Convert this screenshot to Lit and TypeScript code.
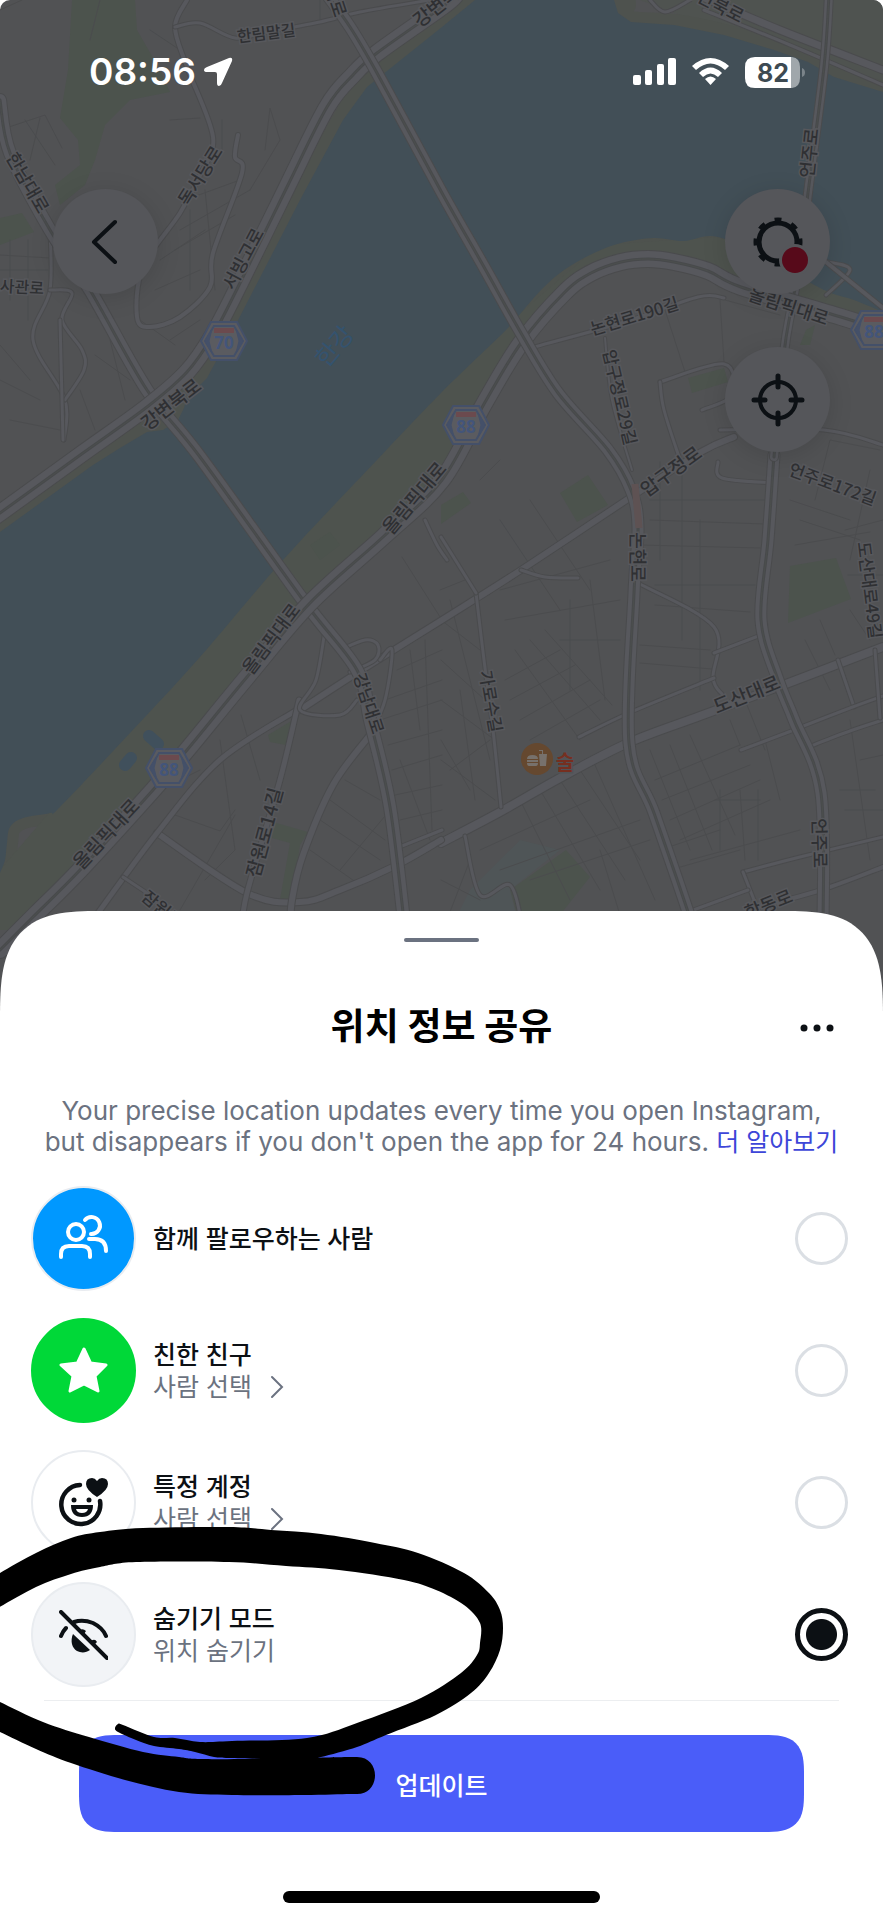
import { LitElement, html, svg, css } from "lit";
import { customElement, state } from "lit/decorators.js";

type Point = [number, number];

/** Turns "x,y x,y ..." into a list of points. */
const parse = (s: string): Point[] =>
  s.trim().split(/\s+/).map((p) => p.split(",").map(Number) as Point);

/** Smooth curve through all points (Catmull-Rom as cubic Béziers). */
const smooth = (s: string, join = "M"): string => {
  const p = parse(s);
  let d = `${join}${p[0][0]} ${p[0][1]}`;
  for (let i = 0; i < p.length - 1; i++) {
    const a = p[Math.max(i - 1, 0)];
    const b = p[i];
    const c = p[i + 1];
    const e = p[Math.min(i + 2, p.length - 1)];
    d += `C${b[0] + (c[0] - a[0]) / 6} ${b[1] + (c[1] - a[1]) / 6} ${c[0] - (e[0] - b[0]) / 6} ${c[1] - (e[1] - b[1]) / 6} ${c[0]} ${c[1]}`;
  }
  return d;
};

const SOUTH_SHORE =
  "883,312 854,300 824,290 774,262 718,237 684,241 654,238 621,243 594,253 564,270 541,290 521,313 506,330 441,393 377,460 283,560 200,657 130,733 60,807 50,813 23,818 10,827 7,843 5,860 0,873";
const NORTH_SHORE =
  "0,532 93,465 120,448 147,432 163,430 178,420 184,408 187,398 207,378 233,330 300,200 343,120 367,87 442,27 475,0 614,0 618,13 631,22 674,25 724,35 774,50 808,62 834,77 883,92";

const OLYMPIC =
  "0,950 33,917 80,870 153,790 187,750 247,677 310,603 383,537 442,480 484,404 521,343 564,293 591,273 621,262 648,259 674,262 708,271 741,287 841,317 900,336";
const GANGBYEON =
  "-10,520 0,513 83,453 147,407 187,372 213,335 240,283 287,187 327,107 353,75 377,53 442,7 455,-4";
const HANNAM =
  "322,-12 350,27 377,73 442,193 484,267 521,333 558,393 608,450 631,490 638,527 634,593 629,743 654,813 688,912 692,930";
const DONGHO = "0,100 10,153 50,230 90,290 147,390 200,457 303,600 357,670 370,720 390,807 405,930";
const EONJU = "774,455 768,540 761,620 778,680 794,720 821,793 823,930";
const EONJU_NORTH = "829,-5 824,67 808,193 800,260 791,310 784,353 774,457";

const PARKS = [
  "72,0 135,0 137,30 160,70 170,92 130,100 105,125 95,160 85,185 60,205 55,185 80,165 78,140 60,118 68,70",
  "0,218 22,213 34,232 0,245",
  "688,378 724,368 728,382 692,393",
  "560,493 588,475 608,505 577,522",
  "441,505 463,492 471,503 441,524",
  "790,566 836,558 851,599 788,623",
  "310,545 330,532 340,545 320,560",
  "510,890 566,850 590,877 560,915 520,925",
  "268,735 293,720 286,745 270,742",
  "273,822 308,832 300,845 292,900 279,905 290,843 272,838",
  "806,330 815,325 810,345 800,345",
];

const ROADS: [string, number][] = [
  ["187,0 175,27 187,67 213,137 200,175 180,213 143,267 137,317 150,327 180,317 210,287 213,253 242,173 235,157 238,135", 4],
  ["175,27 200,23 235,38 266,32 320,22 360,12 430,0", 3],
  ["441,843 500,812 560,778 628,743 700,716 778,687 883,647", 8],
  ["441,840 397,865 340,890 300,902 247,893 157,833", 6],
  ["300,710 357,673 442,620 521,570 631,497 701,452 734,437", 6],
  ["720,430 824,430 883,445", 3],
  ["534,347 621,323 698,297 724,298", 3],
  ["93,920 157,833 220,760 297,710", 5],
  ["299,700 280,780 247,893 242,930", 5],
  ["325,630 316,680 300,710 340,715 357,700", 3],
  ["370,735 333,785 303,855 292,900 290,930", 6],
  ["638,583 714,627 713,678 722,694", 3],
  ["579,737 631,712 714,678", 3],
  ["476,593 484,660 493,730 501,807", 3],
  ["441,537 476,593", 3],
  ["714,653 761,635", 3],
  ["838,660 854,707", 3],
  ["801,727 850,708 883,696", 3],
  ["741,750 794,730", 3],
  ["808,747 850,731 883,720", 3],
  ["743,872 800,857 883,837", 3],
  ["743,872 756,905", 3],
  ["688,912 748,890", 3],
  ["748,910 821,890 883,867", 4],
  ["521,570 545,577 578,578", 3],
  ["465,836 480,895 510,885 522,925", 3],
  ["340,650 365,640 378,645 375,660 350,672", 3],
  ["380,660 392,650 385,700 370,735", 3],
  ["660,382 724,364 732,395 702,410", 3],
  ["660,382 664,410 680,460", 3],
  ["50,230 50,290 33,340 65,400 64,440", 3],
  ["50,290 72,293 62,320 82,350 84,370 65,400", 3],
  ["60,320 62,400 63,440", 3],
  ["123,877 150,895", 3],
  ["605,338 612,400 632,470", 2],
  ["718,462 722,478 774,483", 3],
  ["875,650 880,718", 3],
  ["397,848 442,830", 3],
  ["425,520 437,545 447,560", 3],
  ["826,295 850,270 828,262", 3],
  ["700,-4 780,30 883,70", 7],
  ["704,10 790,45 883,85", 3],
  ["650,0 665,12 690,0", 3],
  ["826,262 883,308", 4],
];

const LANES =
  "M660 462V560M682 470V640M700 520V690M650 500H770M650 520L765 524M640 545L760 548M655 585H755M655 605L750 612M640 645L710 650M640 663L712 669M880 450L830 440L815 500M790 500L850 520M800 520L860 540M870 470L850 560M820 620L835 655M805 640L830 690M850 610L870 640M795 545L870 532" +
  "M500 590L610 560M505 620L620 600M500 520L560 610M530 500L590 590M560 640L620 640M570 600V690M590 580L605 700M515 650L580 740M530 640L600 720M545 630L612 705M505 680L560 650M510 700L575 665M520 720L590 680M530 740L600 700M450 600L490 760M441 620L480 650M441 660L485 700M441 700L495 740M450 770L490 740M460 690L475 800M441 740L470 790M441 760L495 800" +
  "M650 750L690 850M670 745L712 850M690 735L735 835M655 780L740 745M662 800L750 765M670 820L760 780M680 840L770 800M690 860L800 830M715 800H760M720 790V850M740 790L745 860M758 790V860M765 740L780 800M730 720L740 745M745 700L765 750M850 720L870 860M860 760L883 755M840 790H875M845 810H883" +
  "M520 800L570 900M540 790L600 890M560 780L625 880M580 770L640 860M595 765L655 900M480 850L590 800M500 870L640 820M530 880L650 840M600 850L620 915M470 860L450 912M441 880L480 900M660 850L720 830M670 870L740 850" +
  "M397 670L442 650M385 700L442 680M380 720L442 700M388 745L442 730M392 770L442 755M395 795L442 785M400 820L442 810M410 650L420 730M425 640L432 830M400 760L430 840M320 820L380 860M310 850L360 885M330 800L385 840M340 870L390 810M345 780L380 800M220 740L235 850L205 880M241 715L260 780M175 815L220 831L235 810M160 790L200 770M180 910L235 815" +
  "M0 255L50 258M0 270H48M10 240V300M28 240V320M0 130L45 115L62 148M25 120L55 165M40 118L30 160M185 200L240 180M180 230L250 190M175 250L235 215M190 210V290M205 190L215 290M160 260L205 230M155 290L200 270M250 190L280 140L270 108L265 150M170 120L200 118M222 120V150M95 355L130 380M110 340L125 400M0 345L30 380M0 380L40 400M10 420L60 430M80 390L95 430M140 320L175 345M170 340L200 320" +
  "M665 310L685 372M720 300L724 362M725 300L780 315M100 0L90 40M150 30L180 50M320 0V20M0 10L22 0M480 480L500 460M883 520L845 530M848 575H883M440 590L465 580M402 557L442 620";

type Label = { t: string; x: number; y: number; r: number; s: number };
const LABELS: Label[] = [
  { t: "한림말길", x: 266, y: 32, r: -7, s: 16 },
  { t: "한남대로", x: 29, y: 182, r: 60, s: 18 },
  { t: "독서당로", x: 199, y: 175, r: -58, s: 18 },
  { t: "서빙고로", x: 242, y: 258, r: -62, s: 18 },
  { t: "사관로", x: 22, y: 286, r: 3, s: 16 },
  { t: "강변북로", x: 170, y: 403, r: -38, s: 19 },
  { t: "강변북로", x: 442, y: 0, r: -38, s: 19 },
  { t: "대로", x: 337, y: 0, r: 72, s: 18 },
  { t: "언주로", x: 808, y: 153, r: -84, s: 18 },
  { t: "강변북로", x: 714, y: 1, r: 27, s: 18 },
  { t: "논현로190길", x: 634, y: 315, r: -17, s: 17 },
  { t: "압구정로29길", x: 621, y: 397, r: 77, s: 17 },
  { t: "올림픽대로", x: 789, y: 305, r: 18, s: 18 },
  { t: "압구정로", x: 670, y: 470, r: -36, s: 19 },
  { t: "언주로172길", x: 833, y: 483, r: 20, s: 17 },
  { t: "논현로", x: 639, y: 557, r: 90, s: 18 },
  { t: "도산대로49길", x: 871, y: 590, r: 83, s: 17 },
  { t: "도산대로", x: 746, y: 693, r: -22, s: 19 },
  { t: "언주로", x: 821, y: 843, r: 89, s: 18 },
  { t: "가로수길", x: 492, y: 701, r: 80, s: 17 },
  { t: "학동로", x: 768, y: 903, r: -22, s: 18 },
  { t: "올림픽대로", x: 270, y: 638, r: -53, s: 18 },
  { t: "올림픽대로", x: 413, y: 497, r: -50, s: 19 },
  { t: "올림픽대로", x: 105, y: 833, r: -47, s: 19 },
  { t: "강남대로", x: 370, y: 703, r: 72, s: 17 },
  { t: "잠원로14길", x: 263, y: 832, r: -75, s: 19 },
  { t: "잠원로", x: 163, y: 908, r: 40, s: 17 },
];

const SHIELDS: [number, number, string][] = [
  [224, 341, "70"],
  [466, 425, "88"],
  [169, 768, "88"],
  [874, 330, "88"],
];

@customElement("map-view")
export class MapView extends LitElement {
  static styles = css`
    :host { display: block; }
    svg { display: block; width: 100%; }
    .line { fill: none; stroke-linecap: round; stroke-linejoin: round; }
    .label {
      font-family: "Noto Sans CJK KR", sans-serif;
      font-weight: 500;
      fill: #2f3033;
      stroke: #57585c;
      stroke-width: 3px;
      paint-order: stroke;
      text-anchor: middle;
      dominant-baseline: central;
    }
    .river { fill: #34536f; stroke: none; font-weight: 400; }
    .place { fill: #762f20; stroke: #515356; font-weight: 700; }
    .route {
      font: 700 17px "Open Sans", sans-serif;
      fill: #43557a;
      text-anchor: middle;
    }
  `;

  private cased(d: string, width: number, casing = "#4a4b4d") {
    return svg`
      <path class="line" stroke=${casing} stroke-width=${width + 2} d=${d} />
      <path class="line" stroke="#57585d" stroke-width=${width} d=${d} />`;
  }

  private highway(points: string, width: number) {
    const d = smooth(points);
    return svg`
      ${this.cased(d, width)}
      <path class="line" stroke="#484a4c" stroke-width="3" d=${d} />
      <path class="line" stroke="#4c4f4e" stroke-width="1" d=${d} />`;
  }

  render() {
    return html`
      <svg viewBox="0 0 883 1030" role="img" aria-label="지도">
        <rect width="883" height="1030" fill="#515254" />
        <path fill="#4f5350" d="M640 0H883V120L800 60Z" />
        <path fill="#4e524e" d=${smooth(NORTH_SHORE) + "L883 300V312" + smooth(SOUTH_SHORE, "L") + "Z"}
          stroke="#4e524e" stroke-width="22" stroke-linejoin="round" />
        <path fill="#4e534e"
          d="M718 237L850 290V310L741 287L674 258L621 260L564 290L521 340L451 457L442 482L383 534L310 600L247 674L153 787L80 867L20 930H0V870L60 800L283 555L506 325L600 245Z" />
        <path fill="#424f57"
          d=${"M" + NORTH_SHORE.split(" ").join("L") + "V312" + smooth(SOUTH_SHORE, "L") + "Z"} />
        ${PARKS.map((p) => svg`<polygon fill="#4c534d" points=${p} />`)}
        <path fill="#4f5557" d="M470 890L520 840L560 850L510 890L520 930H450Z" />
        <path class="line" stroke="#40505c" stroke-width="12" d="M149 736L158 744M125 765L131 758" />
        <path class="line" stroke="#4b4c4e" stroke-width="1" d=${LANES} />
        ${ROADS.map(([p, w]) => this.cased(smooth(p), w))}
        ${this.highway(EONJU, 11)} ${this.highway(EONJU_NORTH, 8)}
        ${this.highway(DONGHO, 12)}
        ${this.highway(GANGBYEON, 16)}
        ${this.highway(OLYMPIC, 16)}
        ${this.highway(HANNAM, 11)}
        <path stroke="#5e5253" stroke-width="7" d="M635 484L639 528" />
        ${SHIELDS.map(
          ([x, y, n]) => svg`
          <g transform="translate(${x} ${y})">
            <path d="M-23 0L-13 -19H13L23 0L13 19H-13Z" fill="#5a5b60" stroke="#445069" stroke-width="2" />
            <path d="M-19 0L-10 -15H10L19 0L10 15H-10Z" fill="#5a5b60" stroke="#445069" stroke-width="2" />
            <path d="M-19 0L-12 -12L-15 0L-12 12ZM19 0L12 -12L15 0L12 12Z" fill="#445069" stroke="#445069" />
            <rect x="-10" y="-13" width="20" height="5" fill="#6b4a4e" />
            <text class="route" y="8">${n}</text>
          </g>`
        )}
        ${LABELS.map(
          (l) => svg`<text class="label" font-size=${l.s}
            transform="translate(${l.x} ${l.y}) rotate(${l.r})">${l.t}</text>`
        )}
        <text class="label river" font-size="24" transform="translate(333 345) rotate(-50)">한강</text>
        <circle cx="537" cy="759" r="16" fill="#65482f" />
        <path fill="#77716c"
          d="M527 759q0-4 5.500-4t5.500 4zM527 760h11v2h-11zM527 763h11q0 3-2 3h-7q-2 0-2-3zM539 754h8l-1 12h-6zM542 754v-3h-3v-1h4v4z" />
        <text class="label place" font-size="20" x="565" y="761">술</text>
      </svg>
    `;
  }
}

@customElement("status-bar")
export class StatusBar extends LitElement {
  static styles = css`
    :host {
      display: flex;
      justify-content: space-between;
      align-items: center;
      color: #fff;
      height: 44px;
    }
    .side { display: flex; align-items: center; }
    .time { font: 600 37px/44px Inter, sans-serif; margin-right: 7px; }
    .icons { gap: 16px; }
    svg { display: block; fill: currentColor; }
    .charge { font: 700 25px Inter, sans-serif; fill: #3d4a52; text-anchor: middle; }
  `;

  render() {
    return html`
      <div class="side">
        <span class="time">08:56</span>
        <svg width="30" height="30" viewBox="0 0 30 30">
          <path d="M26 1Q30 0 29 4L19 26Q18 29 16 29Q14 29 14 26V17Q14 15 12 15H4Q1 15 1 13Q1 11 4 10Z" />
        </svg>
      </div>
      <div class="side icons">
        <svg width="43" height="28" viewBox="0 0 43 28">
          <rect y="17" width="8" height="10" rx="2" />
          <rect x="12" y="12" width="7" height="15" rx="2" />
          <rect x="24" y="6" width="7" height="21" rx="2" />
          <rect x="35" width="8" height="27" rx="2" />
        </svg>
        <svg width="37" height="28" viewBox="0 0 37 28">
          <path d="M0 8Q18.500 -8 37 8L33 12Q18.500 -1 4 12Z" />
          <path d="M7 15Q18.500 4 30 15L26 19Q18.500 12 11 19Z" />
          <path d="M13 21Q18.500 16 24 21L18.500 27Z" />
        </svg>
        <svg width="60" height="31" viewBox="0 0 60 31" role="img" aria-label="82%">
          <path d="M46 0H47Q55 1 55 10V21Q55 30 47 31H46Z" fill="#a0a7ab" />
          <path d="M46 0H10Q0 0 0 10V21Q0 31 10 31H46Z" />
          <path d="M57 11Q60 12 60 15.500Q60 19 57 20Z" fill="#7b848a" />
          <text class="charge" x="28" y="25">82</text>
        </svg>
      </div>
    `;
  }
}

interface Option {
  id: string;
  title: string;
  note?: string;
  picker?: boolean;
}

const OPTIONS: Option[] = [
  { id: "mutual", title: "함께 팔로우하는 사람" },
  { id: "close", title: "친한 친구", note: "사람 선택", picker: true },
  { id: "custom", title: "특정 계정", note: "사람 선택", picker: true },
  { id: "ghost", title: "숨기기 모드", note: "위치 숨기기" },
];

const ICONS: Record<string, unknown> = {
  mutual: svg`
    <g fill="none" stroke="#fff" stroke-width="4" stroke-linecap="round">
      <circle cx="17" cy="18" r="8" />
      <path d="M2 43V40Q2 32 10 32H23Q31 32 31 40V43M26 6A8.500 8.500 0 1 1 32 20M30 25H36Q47 25 47 37" />
    </g>`,
  close: svg`
    <path fill="#fff" stroke="#fff" stroke-width="3" stroke-linejoin="round"
      d="M25 3L31.500 17L47 19L36 30L39 45L25 38L11 45L14 30L2 19L18.500 17Z" />`,
  custom: svg`
    <path fill="none" stroke="#0c1014" stroke-width="4.500" stroke-linecap="round" d="M21 7A19.500 19.500 0 1 0 41 23" />
    <g fill="#0c1014">
      <circle cx="15" cy="22" r="2.500" /><circle cx="30" cy="22" r="2.500" />
      <path fill-rule="evenodd" d="M12 27H34Q34 39 23 39Q12 39 12 27ZM17 31Q18 35 23 35Q28 35 29 31Z" />
      <path d="M38 19Q27 12 27 6Q27 0 33 0Q36 0 38 3Q40 0 43 0Q49 0 49 6Q49 12 38 19Z" />
    </g>`,
  ghost: svg`
    <g fill="none" stroke="#0c1014" stroke-width="4" stroke-linecap="round">
      <path d="M2 2L48 48M15 12Q24 9 34 13Q44 18 47 26M2 26Q4 21 7 18" />
    </g>
    <path fill="#0c1014" d="M14 24C11 31 13 38 18 41C22 43 27 43 31 40ZM21 20Q24 18 27 21L25 24ZM32 31Q36 28 38 32L35 35Z" />`,
};

/** Hand-drawn marker loop round the last option. */
const MARKER =
  smooth(
    "-2,1574 36,1553 71,1538 100,1532 143,1528 229,1527 271,1530 321,1534 375,1543 418,1553 464,1573 489,1593 500,1610 503,1628 500,1650 489,1673 471,1693 436,1715 386,1735 357,1747 321,1757 304,1759"
  ) +
  smooth(
    "304,1759 268,1759 229,1758 214,1757 195,1752 179,1749 154,1746 136,1740 118,1732 115,1728 118,1724 123,1725 154,1737 175,1738 200,1742 232,1741 307,1738 357,1723 421,1698 461,1673 477,1655 480,1643 480,1623 464,1605 436,1590 404,1580 339,1570 286,1566 229,1562 136,1562 100,1567 71,1574 36,1587 -2,1608",
    "L"
  ) +
  "Z" +
  smooth("-2,1701 43,1722 89,1737 143,1752 179,1757 200,1759 268,1759 304,1758 350,1757") +
  "H357C381 1757 381 1794 357 1794" +
  smooth("350,1794 304,1795 232,1795 179,1792 125,1780 71,1763 36,1749 -2,1731", "L") +
  "Z";

@customElement("app-root")
export class AppRoot extends LitElement {
  static styles = css`
    :host {
      display: block;
      background: #fff;
      color: #0c1014;
      font-family: Inter, "Noto Sans CJK KR", sans-serif;
    }
    .screen {
      position: relative;
      min-height: 100vh;
      display: flex;
      flex-direction: column;
      overflow: hidden;
      border-radius: 10px 10px 0 0;
    }
    .map { position: absolute; inset: 0 0 auto; }
    .top { position: relative; flex: 1 0 auto; padding: 50px 53px; }
    .status { padding: 0 25px 0 36px; }
    .controls {
      display: flex;
      justify-content: space-between;
      align-items: flex-start;
      margin-top: 95px;
    }
    .stack { display: grid; gap: 53px; }
    button { border: 0; padding: 0; font: inherit; color: inherit; background: none; cursor: pointer; }
    .round {
      width: 105px;
      height: 105px;
      border-radius: 50%;
      background: #55565a;
      box-shadow: 0 4px 24px #00000020;
    }
    svg { display: block; }
    .round svg { margin: auto; }

    .sheet {
      position: relative;
      background: #fff;
      border-radius: 66px 66px 0 0 / 84px 84px 0 0;
      padding: 27px 31px 17px;
      display: flex;
      flex-direction: column;
    }
    @supports (corner-shape: superellipse(1.6)) {
      .sheet {
        border-radius: 100px 100px 0 0 / 108px 108px 0 0;
        corner-shape: superellipse(1.6);
      }
      .update.update { border-radius: 40px; corner-shape: superellipse(1.6); }
    }
    .handle { width: 75px; height: 4px; border-radius: 2px; background: #6b7280; align-self: center; }
    .header {
      display: grid;
      grid-template-columns: 48px 1fr 48px;
      align-items: center;
      margin: 61px 13px 0;
    }
    h1 {
      grid-column: 2;
      margin: 0;
      font-size: 37px;
      line-height: 48px;
      font-weight: 700;
      text-align: center;
      color: #000;
    }
    .intro {
      margin: 44px 0 28px;
      font-size: 26px;
      line-height: 31px;
      text-align: center;
      color: #6b7280;
    }
    a { color: #3d46d8; font-size: 25px; text-decoration: none; }

    .options {
      position: relative;
      border: 0;
      margin: 0;
      padding: 0 4px 0 0;
      display: grid;
      gap: 27px;
    }
    .option { display: flex; align-items: center; gap: 17px; }
    .avatar {
      box-sizing: border-box;
      width: 105px;
      height: 105px;
      border-radius: 50%;
      border: 2px solid #e9ecf0;
      display: grid;
      place-items: center;
      flex: none;
    }
    .mutual { background: #0098ff; }
    .close { background: #00d838; border-color: #00d838; }
    .ghost { background: #f2f4f7; }
    .words { flex: 1; display: grid; justify-items: start; font-size: 25px; line-height: 32px; }
    .name { font-weight: 500; }
    .note { color: #6b7280; display: flex; align-items: center; gap: 18px; }
    .radio {
      appearance: none;
      box-sizing: border-box;
      width: 53px;
      height: 53px;
      margin: 0;
      border: 3px solid #dbdfe4;
      border-radius: 50%;
      flex: none;
    }
    .radio:checked {
      border: 5px solid #0c1014;
      background: radial-gradient(circle, #0c1014 15px, #fff 16px);
    }
    .marker {
      position: absolute;
      left: -31px;
      top: 314px;
      pointer-events: none;
    }
    .footer {
      border-top: 1px solid #eceef0;
      margin: 13px 13px 0;
      padding: 34px 35px 59px;
      display: grid;
    }
    .update {
      height: 97px;
      border-radius: 30px;
      background: #4a5df9;
      color: #fff;
      font-size: 25px;
      font-weight: 500;
    }
    .home { width: 317px; height: 12px; border-radius: 6px; background: #000; align-self: center; }
  `;

  @state() private selected = "ghost";

  private note(o: Option) {
    if (!o.note) return null;
    if (!o.picker) return html`<span class="note">${o.note}</span>`;
    return html`<button class="note">
      ${o.note}
      <svg width="14" height="24" viewBox="0 0 14 24" fill="none" stroke="#6b7280" stroke-width="2" stroke-linecap="round">
        <path d="M2 2L12 12L2 22" />
      </svg>
    </button>`;
  }

  render() {
    return html`
      <main class="screen">
        <map-view class="map"></map-view>
        <div class="top">
          <status-bar class="status"></status-bar>
          <div class="controls">
            <button class="round" aria-label="뒤로">
              <svg width="48" height="48" viewBox="0 0 48 48" fill="none" stroke="#0c1014" stroke-width="4"
                stroke-linecap="round" stroke-linejoin="round">
                <path d="M33 4L12 24L33 44" />
              </svg>
            </button>
            <div class="stack">
              <button class="round" aria-label="설정">
                <svg width="64" height="64" viewBox="0 0 64 64" fill="none" stroke="#0c1014">
                  <circle cx="32" cy="32" r="19" stroke-width="5" />
                  <circle cx="32" cy="32" r="22" stroke-width="5" pathLength="80" stroke-dasharray="4 6" stroke-dashoffset="2" />
                  <circle cx="49" cy="50" r="16" fill="#55565a" stroke="none" />
                  <circle cx="49" cy="50" r="13" fill="#570a1a" stroke="none" />
                </svg>
              </button>
              <button class="round" aria-label="내 위치">
                <svg width="56" height="56" viewBox="0 0 56 56" fill="none" stroke="#0c1014" stroke-width="5" stroke-linecap="round">
                  <circle cx="28" cy="28" r="18" stroke-width="4" />
                  <path d="M28 4V15M28 41V52M4 28H15M41 28H52" />
                </svg>
              </button>
            </div>
          </div>
        </div>

        <section class="sheet">
          <div class="handle"></div>
          <div class="header">
            <h1>위치 정보 공유</h1>
            <button aria-label="더 보기">
              <svg width="48" height="48" viewBox="0 0 48 48" fill="#0c1014">
                <circle cx="13" cy="25" r="3.500" /><circle cx="26" cy="25" r="3.500" /><circle cx="39" cy="25" r="3.500" />
              </svg>
            </button>
          </div>
          <p class="intro">
            Your precise location updates every time you open Instagram,<br />
            but disappears if you don't open the app for 24 hours. <a href="#">더 알아보기</a>
          </p>
          <fieldset class="options" aria-label="위치 정보 공유">
            ${OPTIONS.map(
              (o) => html`
                <div class="option">
                  <span class="avatar ${o.id}">
                    <svg width="49" height="50" viewBox="0 0 49 50">${ICONS[o.id]}</svg>
                  </span>
                  <div class="words">
                    <label class="name" for=${o.id}>${o.title}</label>
                    ${this.note(o)}
                  </div>
                  <input class="radio" type="radio" name="share" id=${o.id}
                    .checked=${this.selected === o.id}
                    @change=${() => (this.selected = o.id)} />
                </div>
              `
            )}
            <svg class="marker" width="520" height="320" viewBox="0 1500 520 320" aria-hidden="true">
              <path d=${MARKER} />
            </svg>
          </fieldset>
          <div class="footer">
            <button class="update">업데이트</button>
          </div>
          <div class="home"></div>
        </section>
      </main>
    `;
  }
}
